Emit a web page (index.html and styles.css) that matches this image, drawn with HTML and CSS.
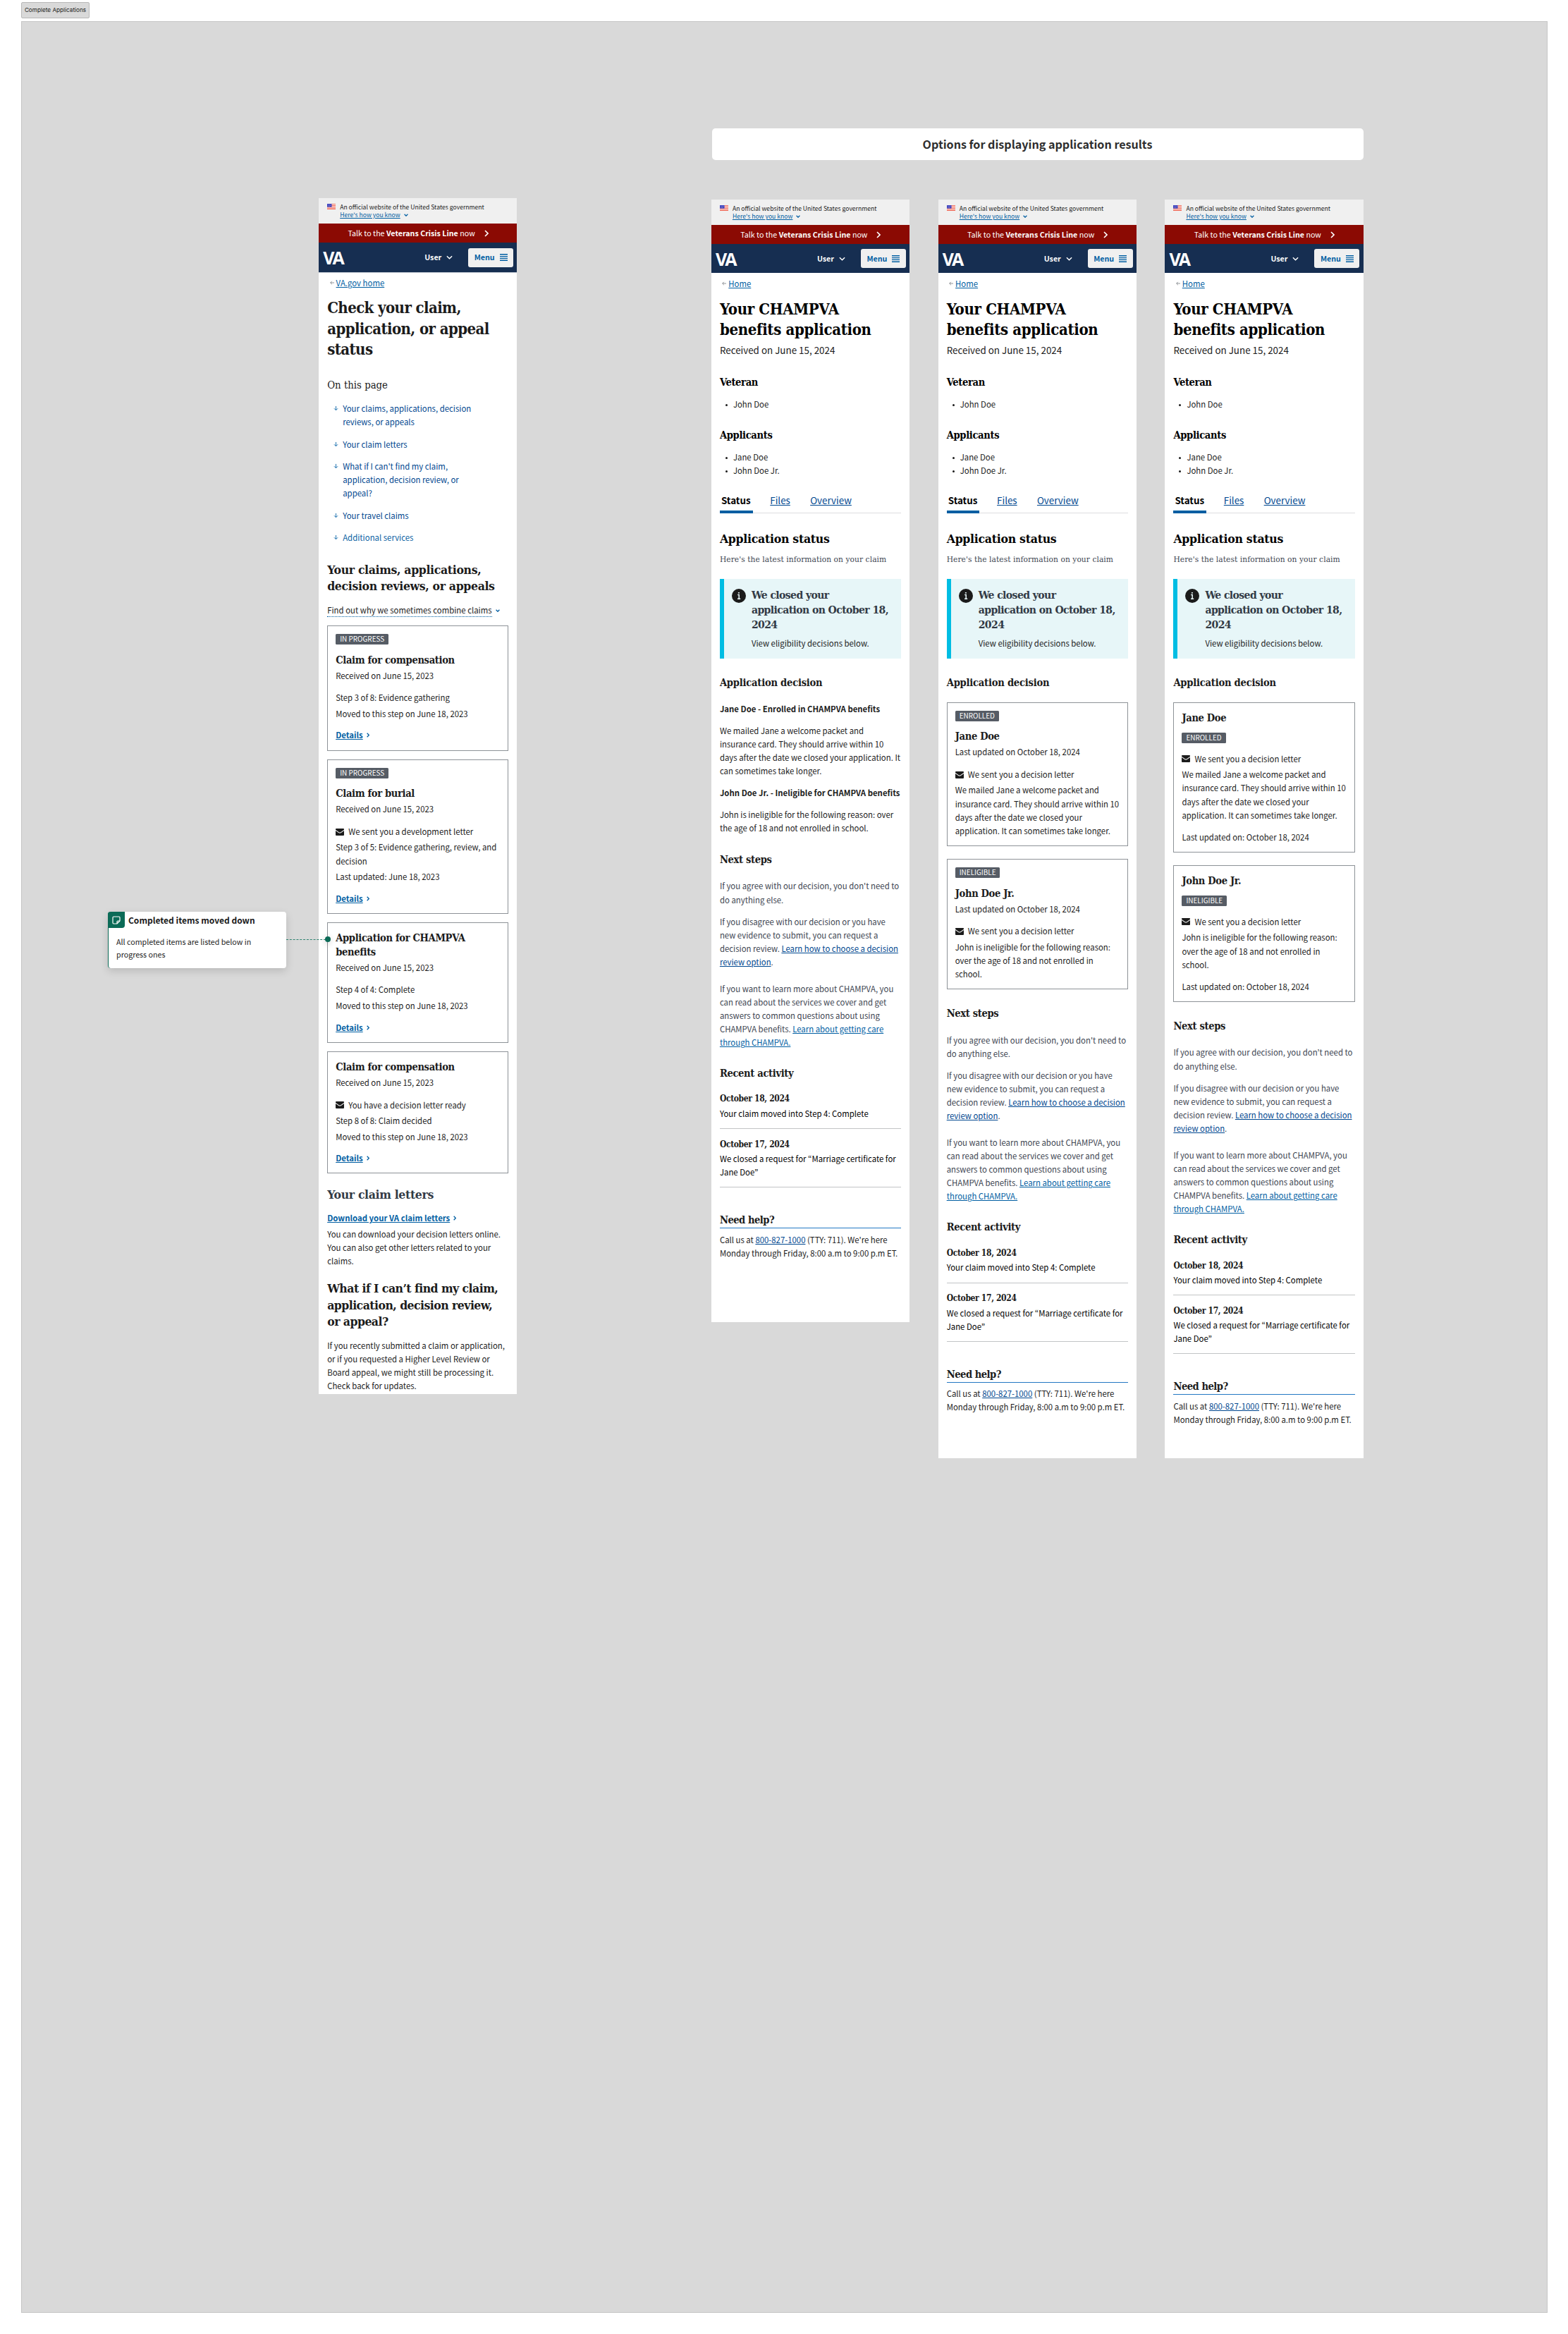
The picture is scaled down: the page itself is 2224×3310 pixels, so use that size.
FILE: index.html
```html
<!DOCTYPE html>
<html lang="en">
<head>
<meta charset="utf-8">
<title>Complete Applications</title>
<link rel="stylesheet" href="styles.css">
</head>
<body>
<svg class="defs" aria-hidden="true">
  <symbol id="flag" viewBox="0 0 12 8"><rect width="12" height="8" fill="#fff"/><path d="M0 .6h12M0 2.5h12M0 4.3h12M0 6.1h12M0 7.6h12" stroke="#f0604d" stroke-width="1"/><rect width="6.5" height="4.6" fill="#3a3fc4"/><path d="M1 1.2h1M3 1.2h1M5 1.2h.8M2 2.4h1M4 2.4h1M1 3.5h1M3 3.5h1" stroke="#aab" stroke-width=".6"/></symbol>
  <symbol id="down" viewBox="0 0 10 6"><path d="M1 1l4 4 4-4" fill="none" stroke="currentColor"/></symbol>
  <symbol id="right" viewBox="0 0 6 10"><path d="M1 1l4 4-4 4" fill="none" stroke="currentColor"/></symbol>
  <symbol id="bars" viewBox="0 0 11 10"><path d="M0 .8h11M0 3.6h11M0 6.4h11M0 9.2h11" stroke="currentColor" stroke-width="1.4"/></symbol>
  <symbol id="left-arrow" viewBox="0 0 7 6"><path d="M7 3H.8M3.3.5L.8 3l2.5 2.5" fill="none" stroke="currentColor" stroke-width=".9"/></symbol>
  <symbol id="down-arrow" viewBox="0 0 8 8"><path d="M4 .5v6.5M1 4.200l3 3 3-3" fill="none" stroke="currentColor" stroke-width="1.1"/></symbol>
  <symbol id="mail" viewBox="0 0 12 10"><path d="M1 0h10q1 0 1 1v.7L7.200 5.200Q6 6 4.800 5.200L0 1.700V1Q0 0 1 0z"/><path d="M0 2.900l4.200 3.100q1.800 1.200 3.600 0L12 2.900V9q0 1-1 1H1q-1 0-1-1z"/></symbol>
</svg>
<div class="board-label">Complete Applications</div>
<div class="board">

  <aside class="note">
    <div class="note-head">
      <span class="note-icon"><svg viewBox="0 0 12 12"><path d="M2.200 1h7.600q1.200 0 1.200 1.200V7L7 11H2.200Q1 11 1 9.800V2.200Q1 1 2.200 1zM11 7H8.200Q7 7 7 8.200V11" fill="none" stroke="#fff" stroke-width="1.200"/></svg></span>
      <strong>Completed items moved down</strong>
    </div>
    <p>All completed items are listed below in progress ones</p>
  </aside>

  <h2 class="options">Options for displaying application results</h2>

  <article class="phone phone-list">
    <div class="gov"><svg class="flag"><use href="#flag"/></svg><div>An official website of the United States government<br><a>Here's how you know</a><svg class="gov-chev"><use href="#down"/></svg></div></div>
    <div class="crisis"><span>Talk to the <b>Veterans Crisis Line</b> now</span><svg><use href="#right"/></svg></div>
    <div class="nav"><span class="logo">VA</span><span class="user">User<svg><use href="#down"/></svg></span><span class="menu">Menu<svg><use href="#bars"/></svg></span></div>
    <main>
      <p class="back"><svg><use href="#left-arrow"/></svg><a>VA.gov home</a></p>
      <h1>Check your claim, application, or appeal status</h1>
      <p class="on-page">On this page</p>
      <ul class="jump">
        <li><svg><use href="#down-arrow"/></svg>Your claims, applications, decision reviews, or appeals</li>
        <li><svg><use href="#down-arrow"/></svg>Your claim letters</li>
        <li><svg><use href="#down-arrow"/></svg>What if I can't find my claim, application, decision review, or appeal?</li>
        <li><svg><use href="#down-arrow"/></svg>Your travel claims</li>
        <li class="alt"><svg><use href="#down-arrow"/></svg>Additional services</li>
      </ul>
      <h2 class="claims-title">Your claims, applications, decision reviews, or appeals</h2>
      <p class="combine"><span>Find out why we sometimes combine claims</span><svg><use href="#down"/></svg></p>
      <section class="card">
        <span class="badge">IN PROGRESS</span>
        <h3>Claim for compensation</h3>
        <p class="sub">Received on June 15, 2023</p>
        <p class="gap">Step 3 of 8: Evidence gathering</p>
        <p class="next">Moved to this step on June 18, 2023</p>
        <p class="details"><a>Details</a><svg><use href="#right"/></svg></p>
      </section>
      <section class="card">
        <span class="badge">IN PROGRESS</span>
        <h3>Claim for burial</h3>
        <p class="sub">Received on June 15, 2023</p>
        <p class="gap mail"><svg><use href="#mail"/></svg>We sent you a development letter</p>
        <p class="next">Step 3 of 5: Evidence gathering, review, and decision</p>
        <p class="next">Last updated: June 18, 2023</p>
        <p class="details"><a>Details</a><svg><use href="#right"/></svg></p>
      </section>
      <section class="card">
        <h3>Application for CHAMPVA benefits</h3>
        <p class="sub">Received on June 15, 2023</p>
        <p class="gap">Step 4 of 4: Complete</p>
        <p class="next">Moved to this step on June 18, 2023</p>
        <p class="details"><a>Details</a><svg><use href="#right"/></svg></p>
      </section>
      <section class="card">
        <h3>Claim for compensation</h3>
        <p class="sub">Received on June 15, 2023</p>
        <p class="gap mail"><svg><use href="#mail"/></svg>You have a decision letter ready</p>
        <p class="next">Step 8 of 8: Claim decided</p>
        <p class="next">Moved to this step on June 18, 2023</p>
        <p class="details"><a>Details</a><svg><use href="#right"/></svg></p>
      </section>
      <h2 class="letters-title">Your claim letters</h2>
      <p class="details"><a>Download your VA claim letters</a><svg><use href="#right"/></svg></p>
      <p class="next">You can download your decision letters online. You can also get other letters related to your claims.</p>
      <h2 class="missing-title">What if I can’t find my claim, application, decision review, or&nbsp;appeal?</h2>
      <p class="gap">If you recently submitted a claim or application, or if you requested a Higher Level Review or Board appeal, we might still be processing it. Check back for updates.</p>
    </main>
  </article>

  <article class="phone detail option-a">
    <div class="gov"><svg class="flag"><use href="#flag"/></svg><div>An official website of the United States government<br><a>Here's how you know</a><svg class="gov-chev"><use href="#down"/></svg></div></div>
    <div class="crisis"><span>Talk to the <b>Veterans Crisis Line</b> now</span><svg><use href="#right"/></svg></div>
    <div class="nav"><span class="logo">VA</span><span class="user">User<svg><use href="#down"/></svg></span><span class="menu">Menu<svg><use href="#bars"/></svg></span></div>
    <main>
      <p class="back"><svg><use href="#left-arrow"/></svg><a>Home</a></p>
      <h1>Your CHAMPVA benefits application</h1>
      <p class="received">Received on June 15, 2024</p>
      <h3 class="people-title">Veteran</h3>
      <ul class="people"><li>John Doe</li></ul>
      <h3 class="people-title">Applicants</h3>
      <ul class="people"><li>Jane Doe</li><li>John Doe Jr.</li></ul>
      <nav class="tabs"><b>Status</b><a>Files</a><a>Overview</a></nav>
      <h2 class="status-title">Application status</h2>
      <p class="latest">Here's the latest information on your claim</p>
      <section class="alert"><svg viewBox="0 0 20 20"><circle cx="10" cy="10" r="10" fill="#1b1b1b"/><path d="M8.200 8.500h2v5.500M8 14.200h4.200M8.900 5.800h2" fill="none" stroke="#e7f6f8" stroke-width="1.500"/></svg><div><h3>We closed your<br>application on October 18, 2024</h3><p>View eligibility decisions below.</p></div></section>
      <h3 class="decision-title">Application decision</h3>
      <p class="person"><b>Jane Doe - Enrolled in CHAMPVA benefits</b></p>
      <p class="outcome">We mailed Jane a welcome packet and<br>insurance card. They should arrive within 10<br>days after the date we closed your application. It can sometimes take longer.</p>
      <p class="person second"><b>John Doe Jr. - Ineligible for CHAMPVA benefits</b></p>
      <p class="outcome">John is ineligible for the following reason: over the age of 18 and not enrolled in school.</p>
      <h3 class="steps-title">Next steps</h3>
      <p class="agree">If you agree with our decision, you don't need to do anything else.</p>
      <p class="disagree">If you disagree with our decision or you have<br>new evidence to submit, you can request a<br>decision review. <a>Learn how to choose a decision review option</a>.</p>
      <p class="learn">If you want to learn more about CHAMPVA, you can read about the services we cover and get answers to common questions about using CHAMPVA benefits. <a class="alt">Learn about getting care through CHAMPVA.</a></p>
      <h3 class="recent-title">Recent activity</h3>
      <div class="event"><h4>October 18, 2024</h4><p>Your claim moved into Step 4: Complete</p></div>
      <div class="event"><h4>October 17, 2024</h4><p>We closed a request for “Marriage certificate for Jane Doe”</p></div>
      <h3 class="help-title">Need help?</h3>
      <p class="help">Call us at <a>800-827-1000</a> (TTY: 711). We're here Monday through Friday, 8:00 a.m to 9:00 p.m ET.</p>
    </main>
  </article>

  <article class="phone detail option-b">
    <div class="gov"><svg class="flag"><use href="#flag"/></svg><div>An official website of the United States government<br><a>Here's how you know</a><svg class="gov-chev"><use href="#down"/></svg></div></div>
    <div class="crisis"><span>Talk to the <b>Veterans Crisis Line</b> now</span><svg><use href="#right"/></svg></div>
    <div class="nav"><span class="logo">VA</span><span class="user">User<svg><use href="#down"/></svg></span><span class="menu">Menu<svg><use href="#bars"/></svg></span></div>
    <main>
      <p class="back"><svg><use href="#left-arrow"/></svg><a>Home</a></p>
      <h1>Your CHAMPVA benefits application</h1>
      <p class="received">Received on June 15, 2024</p>
      <h3 class="people-title">Veteran</h3>
      <ul class="people"><li>John Doe</li></ul>
      <h3 class="people-title">Applicants</h3>
      <ul class="people"><li>Jane Doe</li><li>John Doe Jr.</li></ul>
      <nav class="tabs"><b>Status</b><a>Files</a><a>Overview</a></nav>
      <h2 class="status-title">Application status</h2>
      <p class="latest">Here's the latest information on your claim</p>
      <section class="alert"><svg viewBox="0 0 20 20"><circle cx="10" cy="10" r="10" fill="#1b1b1b"/><path d="M8.200 8.500h2v5.500M8 14.200h4.200M8.900 5.800h2" fill="none" stroke="#e7f6f8" stroke-width="1.500"/></svg><div><h3>We closed your<br>application on October 18, 2024</h3><p>View eligibility decisions below.</p></div></section>
      <h3 class="decision-title">Application decision</h3>
      <section class="card">
        <span class="badge">ENROLLED</span>
        <h3>Jane Doe</h3>
        <p class="sub">Last updated on October 18, 2024</p>
        <p class="gap mail"><svg><use href="#mail"/></svg>We sent you a decision letter</p>
        <p class="next">We mailed Jane a welcome packet and insurance card. They should arrive within 10 days after the date we closed your application. It can sometimes take longer.</p>
      </section>
      <section class="card">
        <span class="badge">INELIGIBLE</span>
        <h3>John Doe Jr.</h3>
        <p class="sub">Last updated on October 18, 2024</p>
        <p class="gap mail"><svg><use href="#mail"/></svg>We sent you a decision letter</p>
        <p class="next">John is ineligible for the following reason: over the age of 18 and not enrolled in school.</p>
      </section>
      <h3 class="steps-title">Next steps</h3>
      <p class="agree">If you agree with our decision, you don't need to do anything else.</p>
      <p class="disagree">If you disagree with our decision or you have<br>new evidence to submit, you can request a<br>decision review. <a>Learn how to choose a decision review option</a>.</p>
      <p class="learn">If you want to learn more about CHAMPVA, you can read about the services we cover and get answers to common questions about using CHAMPVA benefits. <a class="alt">Learn about getting care through CHAMPVA.</a></p>
      <h3 class="recent-title">Recent activity</h3>
      <div class="event"><h4>October 18, 2024</h4><p>Your claim moved into Step 4: Complete</p></div>
      <div class="event"><h4>October 17, 2024</h4><p>We closed a request for “Marriage certificate for Jane Doe”</p></div>
      <h3 class="help-title">Need help?</h3>
      <p class="help">Call us at <a>800-827-1000</a> (TTY: 711). We're here Monday through Friday, 8:00 a.m to 9:00 p.m ET.</p>
    </main>
  </article>

  <article class="phone detail option-c">
    <div class="gov"><svg class="flag"><use href="#flag"/></svg><div>An official website of the United States government<br><a>Here's how you know</a><svg class="gov-chev"><use href="#down"/></svg></div></div>
    <div class="crisis"><span>Talk to the <b>Veterans Crisis Line</b> now</span><svg><use href="#right"/></svg></div>
    <div class="nav"><span class="logo">VA</span><span class="user">User<svg><use href="#down"/></svg></span><span class="menu">Menu<svg><use href="#bars"/></svg></span></div>
    <main>
      <p class="back"><svg><use href="#left-arrow"/></svg><a>Home</a></p>
      <h1>Your CHAMPVA benefits application</h1>
      <p class="received">Received on June 15, 2024</p>
      <h3 class="people-title">Veteran</h3>
      <ul class="people"><li>John Doe</li></ul>
      <h3 class="people-title">Applicants</h3>
      <ul class="people"><li>Jane Doe</li><li>John Doe Jr.</li></ul>
      <nav class="tabs"><b>Status</b><a>Files</a><a>Overview</a></nav>
      <h2 class="status-title">Application status</h2>
      <p class="latest">Here's the latest information on your claim</p>
      <section class="alert"><svg viewBox="0 0 20 20"><circle cx="10" cy="10" r="10" fill="#1b1b1b"/><path d="M8.200 8.500h2v5.500M8 14.200h4.200M8.900 5.800h2" fill="none" stroke="#e7f6f8" stroke-width="1.500"/></svg><div><h3>We closed your<br>application on October 18, 2024</h3><p>View eligibility decisions below.</p></div></section>
      <h3 class="decision-title">Application decision</h3>
      <section class="card">
        <h3>Jane Doe</h3>
        <span class="badge">ENROLLED</span>
        <p class="gap mail"><svg><use href="#mail"/></svg>We sent you a decision letter</p>
        <p class="next">We mailed Jane a welcome packet and insurance card. They should arrive within 10 days after the date we closed your application. It can sometimes take longer.</p>
        <p class="gap">Last updated on: October 18, 2024</p>
      </section>
      <section class="card">
        <h3>John Doe Jr.</h3>
        <span class="badge">INELIGIBLE</span>
        <p class="gap mail"><svg><use href="#mail"/></svg>We sent you a decision letter</p>
        <p class="next">John is ineligible for the following reason: over the age of 18 and not enrolled in school.</p>
        <p class="gap">Last updated on: October 18, 2024</p>
      </section>
      <h3 class="steps-title">Next steps</h3>
      <p class="agree">If you agree with our decision, you don’t need to do anything else.</p>
      <p class="disagree">If you disagree with our decision or you have<br>new evidence to submit, you can request a<br>decision review. <a>Learn how to choose a decision review option</a>.</p>
      <p class="learn">If you want to learn more about CHAMPVA, you can read about the services we cover and get answers to common questions about using CHAMPVA benefits. <a class="alt">Learn about getting care through CHAMPVA.</a></p>
      <h3 class="recent-title">Recent activity</h3>
      <div class="event"><h4>October 18, 2024</h4><p>Your claim moved into Step 4: Complete</p></div>
      <div class="event"><h4>October 17, 2024</h4><p>We closed a request for “Marriage certificate for Jane Doe”</p></div>
      <h3 class="help-title">Need help?</h3>
      <p class="help">Call us at <a>800-827-1000</a> (TTY: 711). We're here Monday through Friday, 8:00 a.m to 9:00 p.m ET.</p>
    </main>
  </article>
  <div class="connector"></div>
</div>
</body>
</html>
```
FILE: styles.css
```css
:root {
  --sans: "Noto Sans CJK KR", "Open Sans", sans-serif;
  --serif: "DejaVu Serif Condensed", "DejaVu Serif", serif;
  --ink: #1b1b1b;
  --link: #005ea2;
  --line: 19.1px;
}
* { box-sizing: border-box; }
body { margin: 0; width: 2224px; height: 3310px; background: #fff; color: var(--ink); font: 11.380px/var(--line) var(--sans); position: relative; overflow: hidden; }
h1, h2, h3, h4, p, ul { margin: 0; padding: 0; }
ul { list-style: none; }
svg { display: block; flex: none; fill: currentColor; stroke-width: 1.600; }
a { color: var(--link); text-decoration: underline; text-decoration-thickness: 1px; text-underline-offset: 1px; }
.defs { position: absolute; width: 0; height: 0; }

.board-label { position: absolute; left: 30px; top: 3px; width: 97px; height: 22.500px; border: 1px solid #b8b8b8; border-radius: 2px; background: #d9d9d9; font: 8.200px/20px Inter, sans-serif; text-align: center; white-space: nowrap; }
.board { position: absolute; left: 30px; top: 30px; width: 2165px; height: 3250px; border: 1px solid #c6c6c6; background: #d9d9d9; }
/* children are pinned in page coordinates */
.board > * { position: absolute; translate: -31px -31px; }

.options { left: 1009.500px; top: 182px; width: 924px; height: 45px; border-radius: 5px; background: #fff; color: #2e2e2e; font: 700 16.100px/44px var(--sans); letter-spacing: 0; text-align: center; }

.note { left: 153px; top: 1293px; width: 253px; height: 79.500px; border-radius: 4px; background: #fff; border-left: 1px solid #0b6b57; box-shadow: 0 4px 12px rgba(0,0,0,.15); font-size: 10.700px; }
.note-head { display: flex; height: 22.500px; margin-left: -1px; }
.note-icon { width: 24px; height: 22.500px; border-radius: 4px 0 4px 0; background: #0b6b57; padding: 5.500px 6px; }
.note-icon svg { width: 12px; height: 12px; }
.note strong { font-size: 12px; line-height: 23px; margin-left: 5px; white-space: nowrap; }
.note p { margin: 11px 20px 0 11px; line-height: 18px; }
.connector { left: 406px; top: 1332px; width: 56px; border-top: 1.500px dashed #2f8371; }
.connector::after { content: ""; position: absolute; right: -7px; top: -5px; width: 8px; height: 8px; border-radius: 50%; background: #0b6b57; box-shadow: 0 2px 8px rgba(0,0,0,.2); }

.phone { width: 281.300px; background: #fff; }
.phone-list { left: 452.200px; top: 281px; height: 1695.700px; }
.detail { top: 283px; height: 1785px; }
.option-a { left: 1008.900px; height: 1592px; }
.option-b { left: 1330.700px; }
.option-c { left: 1652.400px; }
.phone main { padding: 0 12px; }

.gov { height: 36px; background: #f0f0f0; display: flex; gap: 6px; padding: 6.500px 12px 0; font-size: 8.630px; line-height: 11.500px; white-space: nowrap; }
.gov .flag { width: 12px; height: 8px; margin-top: 1.500px; }
.gov-chev { display: inline-block; width: 6px; height: 4px; margin: 0 0 1px 5px; color: var(--link); stroke-width: 2.100; }
.crisis { height: 27px; background: #8b0a03; color: #fff; display: flex; align-items: center; padding-left: 41.300px; gap: 13px; font-size: 10.700px; line-height: 27px; white-space: nowrap; }
.crisis svg { width: 6px; height: 10px; }
.nav { height: 41px; background: #162e51; color: #fff; display: flex; align-items: center; font-size: 10.700px; font-weight: 700; }
.phone-list .nav { height: 43px; border-bottom: 1px solid #c3c9d3; }
.logo { width: 150px; padding-left: 6px; font: 700 25px/40px "Open Sans", sans-serif; letter-spacing: -3px; }
.user { display: flex; align-items: center; gap: 7px; width: 62px; }
.user svg { width: 9px; height: 6px; }
.menu { display: flex; align-items: center; justify-content: center; gap: 7px; width: 64px; height: 27px; border-radius: 3px; background: #f0f0f0; color: var(--link); }
.menu svg { width: 11px; height: 10px; }

.back { display: flex; align-items: center; gap: 3px; padding-left: 3.400px; margin-top: 4.900px; }
.back svg { width: 6px; height: 6px; color: #71767a; }
h1 { font: 700 22px/29.200px var(--serif); letter-spacing: -.59px; margin-top: 11.400px; }
h2 { font: 700 17.500px/23.500px var(--serif); letter-spacing: -.35px; }
h3 { font: 700 14.600px/19.500px var(--serif); letter-spacing: -.35px; }
h4 { font: 700 12px/18px var(--serif); letter-spacing: -.36px; }
.on-page { font: 14.800px/20px var(--serif); margin-top: 26px; }
.jump { margin-top: 14px; display: flex; flex-direction: column; gap: 12.400px; color: #00478f; }
.jump li { display: flex; padding-left: 9px; padding-right: 40px; }
.jump li svg { width: 7px; height: 8px; margin: 5px 6px 0 0; color: #1a6fae; }
.jump .alt { color: #0a62a3; }
.claims-title { margin-top: 24.500px; }
.combine { display: flex; margin-top: 12px; white-space: nowrap; }
.combine span { border-bottom: 1.500px dotted var(--link); height: 19px; }
.combine svg { width: 6px; height: 4px; margin: 8px 0 0 5px; color: var(--link); stroke-width: 2.200; }
.card { border: 1px solid #8d9297; padding: 11px; margin-top: 12.300px; }
.detail .card { margin-top: 18.200px; }
.badge { display: block; width: fit-content; height: 15.300px; border-radius: 1.500px; background: #565c65; color: #fff; padding: 0 6px; font-size: 9.950px; line-height: 13.600px; }
.badge + h3 { margin-top: 11.200px; }
h3 + .badge { margin-top: 11.800px; }
.sub { margin-top: 3.600px; }
.gap { margin-top: 12.500px; }
.next { margin-top: 3.400px; }
.mail { display: flex; align-items: center; gap: 6px; }
.mail svg { width: 12px; height: 10px; }
.details { display: flex; align-items: center; gap: 5px; margin-top: 11.600px; font-weight: 700; }
.details svg { width: 4px; height: 7px; color: var(--link); stroke-width: 2; }
.letters-title { margin-top: 19px; color: #323a45; }
.missing-title { margin-top: 18px; letter-spacing: -.55px; }

.detail .back { margin-top: 5.900px; }
.detail h1, .people-title, .status-title, .tabs b { color: #000; }
.detail h1 { margin-top: 12px; letter-spacing: -.33px; }
.received { font-size: 13.400px; line-height: 24px; margin-top: 1.800px; }
.people-title { margin-top: 23.900px; }
.people { margin-top: 12.300px; }
.people li { padding-left: 19px; position: relative; }
.people li::before { content: ""; position: absolute; left: 8px; top: 9px; width: 3px; height: 3px; border-radius: 50%; background: var(--ink); }
.tabs { display: flex; margin-top: 20.300px; height: 31px; border-bottom: 1px solid #dcdee0; font-size: 13.400px; line-height: 24px; gap: 28.300px; }
.tabs b { height: 31px; width: 46.700px; padding-left: 2px; border-bottom: 4px solid var(--link); margin-right: -3.600px; }
.tabs a { color: #00478f; }
.status-title { margin-top: 25px; letter-spacing: -.27px; }
.latest { font: 11.900px/18px var(--serif); margin-top: 7.800px; color: #3d4551; white-space: nowrap; letter-spacing: .05px; }
.alert { margin: 19px 0 24px; height: 112.700px; background: #e7f6f8; border-left: 6px solid #00bde3; padding: 11.700px 4px 0 11px; display: flex; gap: 8px; }
.alert svg { width: 20px; height: 20px; margin-top: 2.300px; }
.alert h3 { font-size: 15.600px; line-height: 21px; color: #323a45; letter-spacing: -.6px; }
.alert p { margin-top: 6.600px; }
.decision-title { letter-spacing: -.23px; }
.person { margin-top: 18.300px; white-space: nowrap; }
.person.second { margin-top: 11.900px; }
.outcome { margin-top: 12px; }
.steps-title { margin-top: 24.500px; }
.agree { margin-top: 18.900px; }
.disagree { margin-top: 12px; }
.learn { margin-top: 18.700px; }
.agree, .disagree, .learn { color: #3d4551; }
.disagree a, .help a { color: #00478f; }
.recent-title { margin-top: 23.800px; margin-bottom: 18px; }
.event { border-bottom: 1px solid #c2c4c6; padding-bottom: 11px; margin-bottom: 12.400px; color: #000; }
.event h4 { color: var(--ink); }
.event p { margin-top: 2.600px; }
.help-title { margin-top: 36px; border-bottom: 1.500px solid #2378c3; height: 22px; letter-spacing: -.49px; }
.help { margin-top: 6.600px; }
.option-c .card { padding-bottom: 10.300px; }
```
